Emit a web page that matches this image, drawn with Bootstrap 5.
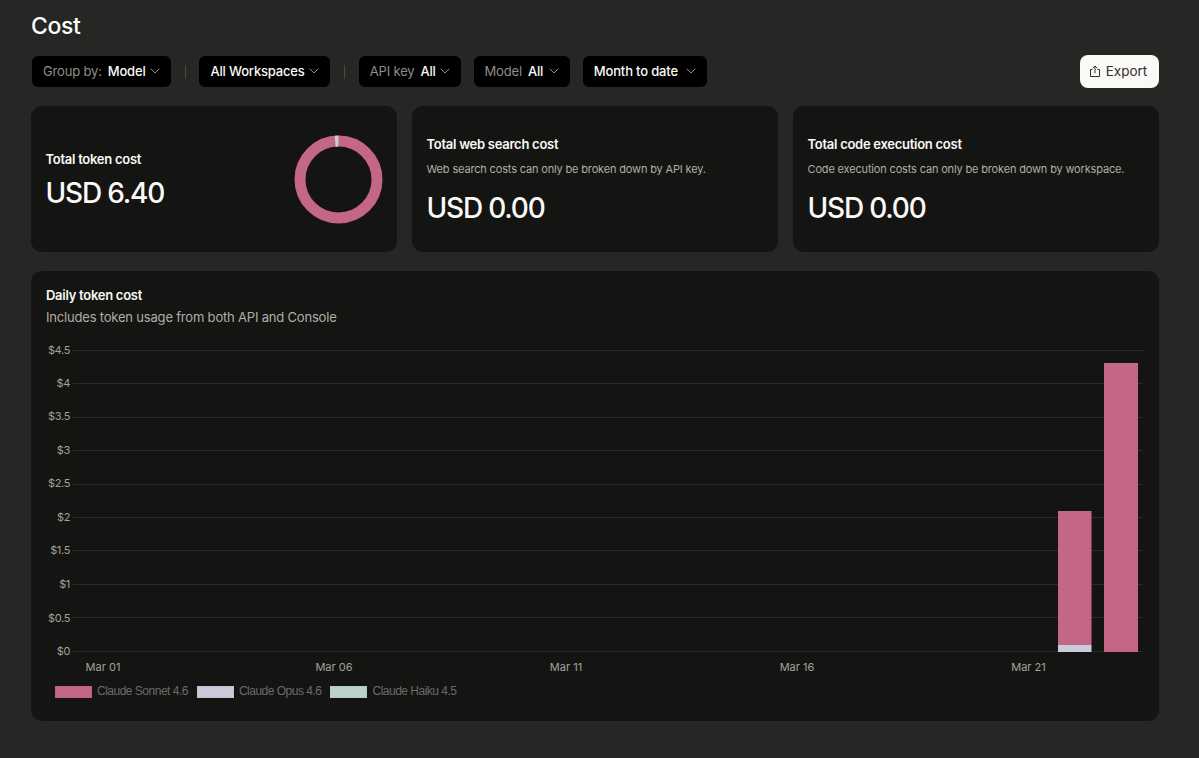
<!DOCTYPE html>
<html lang="en" data-bs-theme="dark">
<head>
<meta charset="utf-8">
<meta name="viewport" content="width=device-width, initial-scale=1">
<title>Cost</title>
<link href="https://cdn.jsdelivr.net/npm/bootstrap@5.3.0/dist/css/bootstrap.min.css" rel="stylesheet">
<style>
  body { background: #262624; color: #faf9f5; font-family: Inter, "Liberation Sans", sans-serif; font-size: 13px; line-height: 20px; overflow: hidden; }
  .page { padding: 10px 40px 0 31px; }
  .title { font-size: 23px; line-height: 32px; font-weight: 550; letter-spacing: -.4px; }
  .toolbar { height: 33px; margin-top: 13px; }
  .filter { height: 31px; background: #000; color: #faf9f5; border: 0; border-radius: 6px; padding: 0 11px 1px; font-size: 13px; font-weight: 500; line-height: 20px; white-space: nowrap; letter-spacing: -.17px; }
  .filter:first-child { margin-left: 1px; }
  .filter + .filter { margin-left: 12.8px; }
  .filter .hint { color: #8f8d86; font-weight: 400; margin-right: 6px; }
  .filter svg { stroke: #8f8d86; }
  .w-group { width: 139px; } .w-space { width: 131px; } .w-key { width: 102px; } .w-model { width: 96.5px; } .w-date { width: 124.5px; }
  .sep { width: 1px; height: 14px; background: #4a4a47; margin: 0 13.7px; }
  .export { width: 79px; height: 33px; background: #faf9f5; color: #30302e; border: 0; border-radius: 8px; padding: 0 3px 0 0; font-size: 13.5px; font-weight: 400; }
  .export svg { margin-right: 5px; }
  .export:hover { background: #fff; color: #30302e; }
  .panel { background: #141413; border: 0; border-radius: 11px; padding: 0 15px; }
  .summary { gap: 15px; margin-top: 18px; }
  .summary .panel { height: 146px; flex: 1 1 0; padding: 1px 14.5px 0; }
  .label { font-size: 13px; font-weight: 600; line-height: 20px; white-space: nowrap; letter-spacing: -.27px; }
  .note { font-size: 11px; line-height: 16px; color: #b0aea5; white-space: nowrap; margin-top: 7px; letter-spacing: -.16px; }
  .amount { font-size: 28px; line-height: 36px; font-weight: 500; white-space: nowrap; letter-spacing: -1.2px; margin: 13px 0 0; }
  .amount-tight { margin-top: 6px; }
  .donut { overflow: visible; }
  .daily { height: 450px; margin-top: 19px; padding-top: 14px; }
  .sub { font-size: 13px; line-height: 20px; color: #b0aea5; margin-top: 2px; letter-spacing: -.19px; }
  .chart { display: block; margin-top: 13px; }
  .chart text { font-size: 11px; fill: #a3a198; }
  .chart .y-axis text { letter-spacing: -.35px; }
  .grid-line { stroke: #2b2b29; stroke-width: 1; }
  .legend { gap: 9px; margin: 6px 0 0 9px; font: 12px/16px "Liberation Sans", Arial, sans-serif; color: #6b6b6b; letter-spacing: -.5px; }
  .swatch { width: 37px; height: 12px; margin-right: 5px; border: 1px solid; position: relative; top: 1px; }
  .sonnet { background: #c46686; border-color: #bd6080; } .opus { background: #cbcadb; border-color: #c3c2d4; } .haiku { background: #bcd1ca; border-color: #b3c9c1; }
</style>
</head>
<body>
<main class="page">
  <h1 class="title m-0">Cost</h1>

  <div class="toolbar d-flex align-items-center">
    <button class="btn filter w-group d-flex align-items-center justify-content-between"><span><span class="hint">Group by:</span>Model</span><svg width="10" height="6" fill="none"><path d="M.7.7 5 5 9.3.7"/></svg></button>
    <span class="sep"></span>
    <button class="btn filter w-space d-flex align-items-center justify-content-between"><span>All Workspaces</span><svg width="10" height="6" fill="none"><path d="M.7.7 5 5 9.3.7"/></svg></button>
    <span class="sep"></span>
    <button class="btn filter w-key d-flex align-items-center justify-content-between"><span><span class="hint">API key</span>All</span><svg width="10" height="6" fill="none"><path d="M.7.7 5 5 9.3.7"/></svg></button>
    <button class="btn filter w-model d-flex align-items-center justify-content-between"><span><span class="hint">Model</span>All</span><svg width="10" height="6" fill="none"><path d="M.7.7 5 5 9.3.7"/></svg></button>
    <button class="btn filter w-date d-flex align-items-center justify-content-between"><span>Month to date</span><svg width="10" height="6" fill="none"><path d="M.7.7 5 5 9.3.7"/></svg></button>
    <button class="btn export d-flex align-items-center justify-content-center ms-auto"><svg width="12" height="13" fill="none" stroke="#30302e"><path d="M3.5 4.5h-2v7h9v-7h-2M6 8.2V1.2M3.7 3.3 6 1l2.3 2.3"/></svg><span>Export</span></button>
  </div>

  <section class="summary d-flex">
    <div class="card panel flex-row align-items-center justify-content-between">
      <div>
        <div class="label">Total token cost</div>
        <div class="amount amount-tight">USD 6.40</div>
      </div>
      <svg class="donut" width="88" height="88" fill="none" stroke-width="11">
        <circle cx="43.5" cy="43.5" r="38.5" stroke="#c46686"/>
        <circle cx="43.5" cy="43.5" r="38.5" stroke="#cbcadb" pathLength="100" stroke-dasharray="1.4 98.6" transform="rotate(-95 43.5 43.5)"/>
      </svg>
    </div>
    <div class="card panel justify-content-center">
      <div class="label">Total web search cost</div>
      <div class="note">Web search costs can only be broken down by API key.</div>
      <div class="amount">USD 0.00</div>
    </div>
    <div class="card panel justify-content-center">
      <div class="label">Total code execution cost</div>
      <div class="note">Code execution costs can only be broken down by workspace.</div>
      <div class="amount">USD 0.00</div>
    </div>
  </section>

  <section class="card panel daily">
    <div class="label">Daily token cost</div>
    <div class="sub">Includes token usage from both API and Console</div>
    <svg class="chart" width="1098" height="337">
      <g class="grid-line">
        <path d="M27 10.5H1097M27 43.5H1097M27 77.5H1097M27 110.5H1097M27 144.5H1097M27 177.5H1097M27 210.5H1097M27 244.5H1097M27 277.5H1097M27 311.5H1097"/>
      </g>
      <g class="y-axis" text-anchor="end">
        <text x="24" y="13.5">$4.5</text><text x="24" y="46.5">$4</text><text x="24" y="80">$3.5</text><text x="24" y="114">$3</text><text x="24" y="147">$2.5</text><text x="24" y="181">$2</text><text x="24" y="214">$1.5</text><text x="24" y="248">$1</text><text x="24" y="282">$0.5</text><text x="24" y="315">$0</text>
      </g>
      <rect x="1012" y="171" width="33.5" height="134" fill="#c46686"/>
      <rect x="1012" y="305" width="33.5" height="7" fill="#cbcadb"/>
      <rect x="1058" y="23" width="34" height="289" fill="#c46686"/>
      <g text-anchor="middle">
        <text x="57" y="331">Mar 01</text><text x="288" y="331">Mar 06</text><text x="520" y="331">Mar 11</text><text x="751" y="331">Mar 16</text><text x="982.5" y="331">Mar 21</text>
      </g>
    </svg>
    <div class="legend d-flex">
      <span class="d-flex align-items-center"><i class="swatch sonnet"></i>Claude Sonnet 4.6</span>
      <span class="d-flex align-items-center"><i class="swatch opus"></i>Claude Opus 4.6</span>
      <span class="d-flex align-items-center"><i class="swatch haiku"></i>Claude Haiku 4.5</span>
    </div>
  </section>
</main>
<script src="https://cdn.jsdelivr.net/npm/bootstrap@5.3.0/dist/js/bootstrap.bundle.min.js"></script>
</body>
</html>
